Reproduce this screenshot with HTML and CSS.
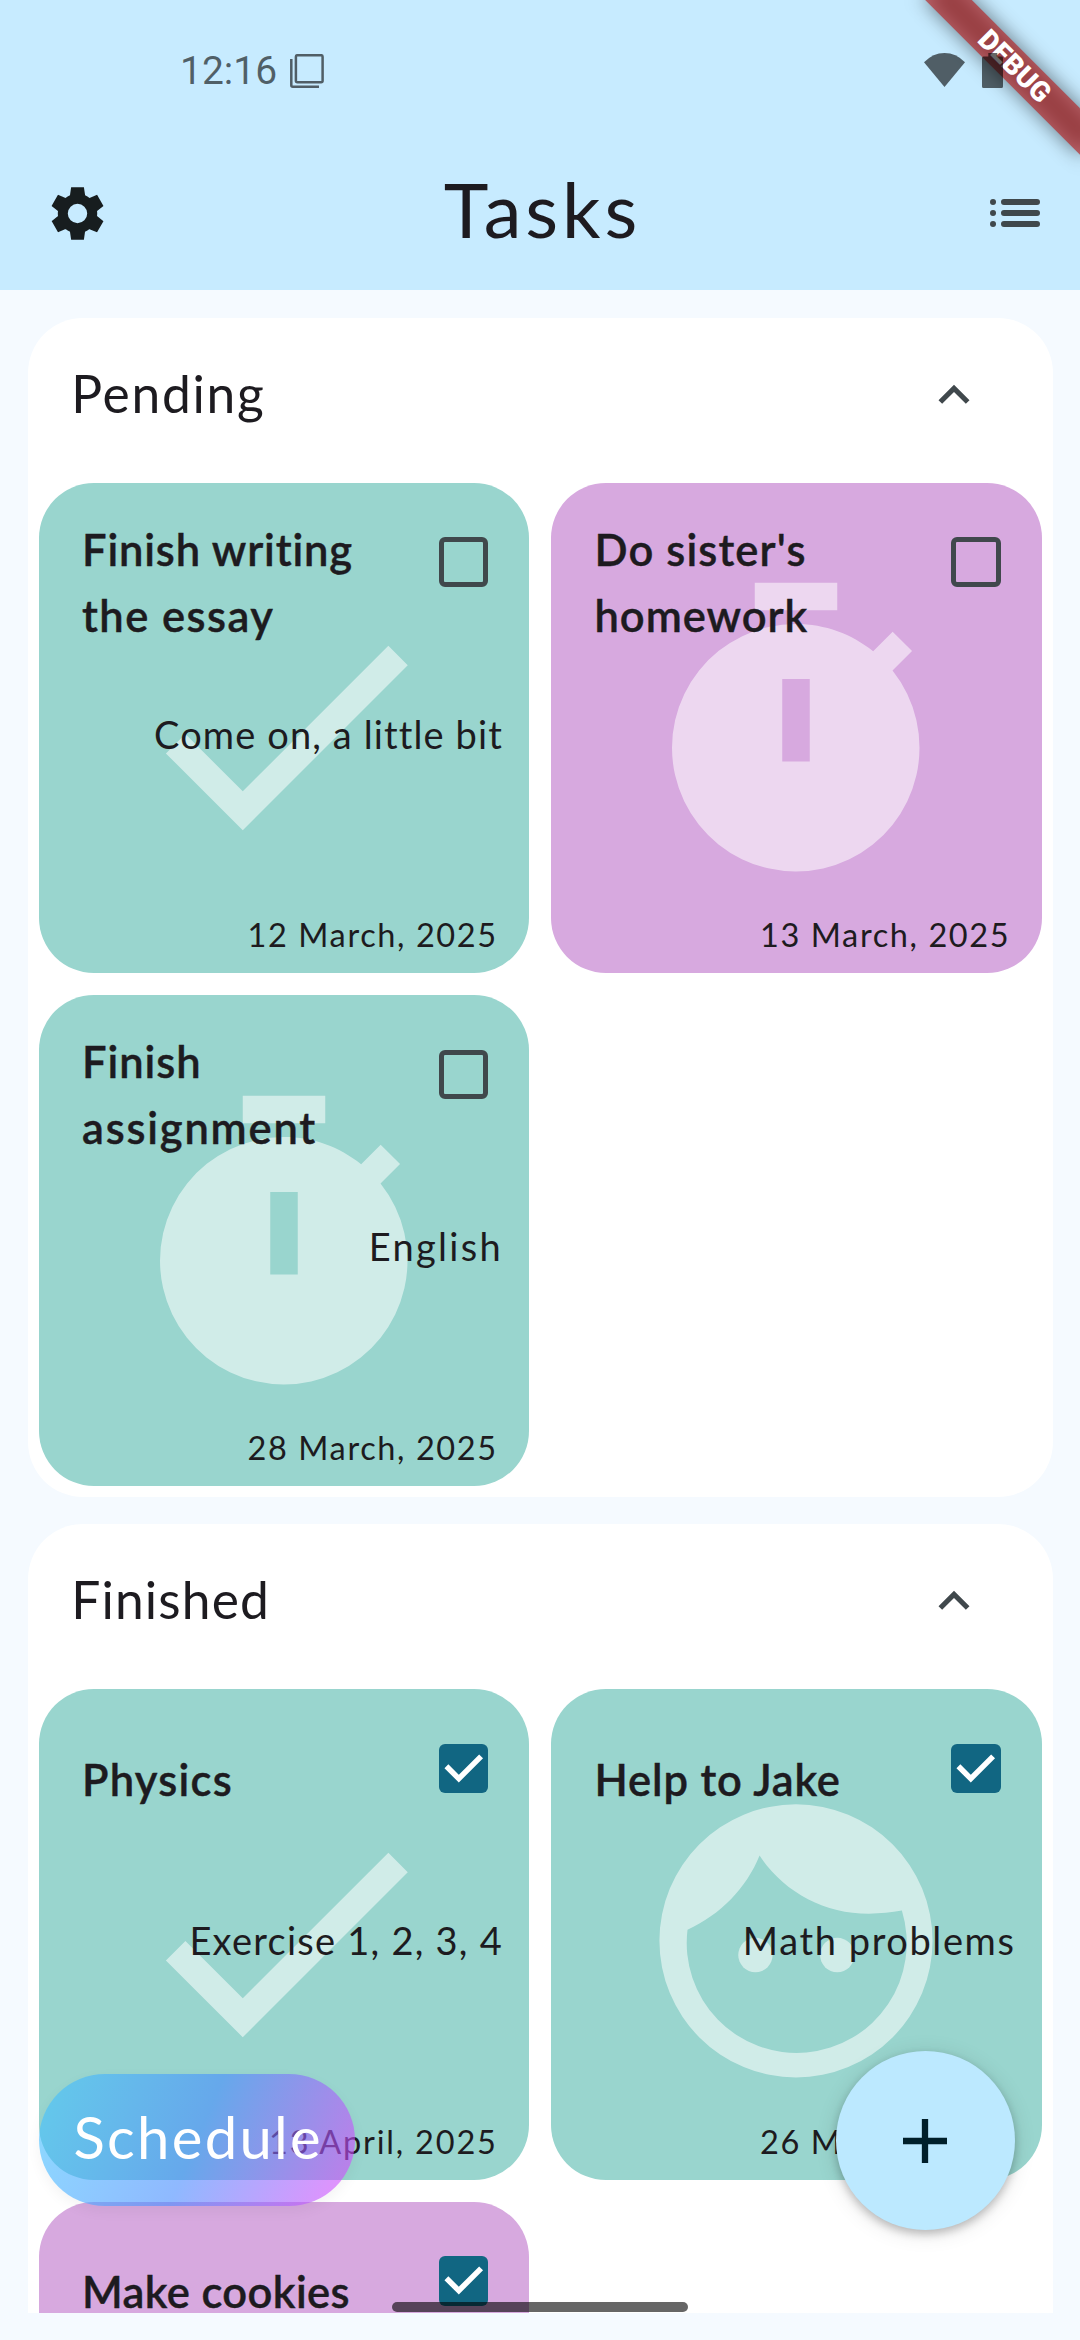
FILE: index.html
```html
<!DOCTYPE html>
<html lang="en">
<head>
<meta charset="utf-8">
<title>Tasks</title>
<link rel="stylesheet" href="styles.css">
</head>
<body>
<svg class="sprite" aria-hidden="true">
  <symbol id="check" viewBox="0 0 24 24"><path d="M9 16.17 4.83 12l-1.42 1.41L9 19 21 7l-1.41-1.41z"/></symbol>
  <symbol id="timer" viewBox="0 0 24 24"><path fill-rule="evenodd" d="M9 1h6v2H9zM12 4c2.12 0 4.07.74 5.61 1.98L19.03 4.56l1.41 1.41-1.42 1.42A9 9 0 1 1 12 4zM11 8v6h2V8z"/></symbol>
  <symbol id="face" viewBox="0 0 24 24"><path fill-rule="evenodd" d="M12 2.06a9.93 9.93 0 1 0 0 19.86 9.93 9.93 0 1 0 0-19.86zM9.35 5.79C11.1 8.4 14 10.01 17.3 10.01c.84 0 1.63-.08 2.4-.22A8 8 0 1 1 4.11 11.18C6.5 10.1 8.4 8.15 9.35 5.79z"/><circle cx="9.05" cy="13.02" r="1.25"/><circle cx="15" cy="13.02" r="1.25"/></symbol>
  <symbol id="chevron" viewBox="0 0 24 24"><path d="m12 8-6 6 1.41 1.41L12 10.83l4.59 4.58L18 14z"/></symbol>
  <symbol id="tick" viewBox="0 0 49.5 49.5"><path d="M7.4 22.3 19.8 34.6 42.1 12.4" fill="none" stroke="#fff" stroke-width="5.5"/></symbol>
</svg>

<div class="screen">
  <header class="top">
    <div class="status">
      <span class="clock">12:16</span>
      <svg class="status-tabs" viewBox="0 0 34 34"><path d="M5.9 2.7a1.5 1.5 0 0 1 1.5-1.5h23.700a1.500 1.500 0 0 1 1.500 1.500v24a1.500 1.500 0 0 1-1.500 1.500H7.400a1.500 1.500 0 0 1-1.500-1.500zM1.300 5v26.200a1.500 1.500 0 0 0 1.500 1.500H29" fill="none" stroke="currentColor" stroke-width="2.500"/></svg>
      <svg class="status-wifi" viewBox="0 0 41 34"><path d="M0 9.3Q9 0 20.5 0T41 9.3L20.5 34z"/></svg>
      <svg class="status-battery" viewBox="0 0 21 35"><path d="M6.300 0h9v3.500h4.200A1.500 1.500 0 0 1 21 5v28.500a1.500 1.500 0 0 1-1.500 1.500h-18A1.500 1.500 0 0 1 0 33.500V5a1.500 1.500 0 0 1 1.500-1.500h4.800z"/></svg>
    </div>
    <div class="appbar">
      <svg class="gear" viewBox="0 0 24 24"><path d="M19.44 12.99l-.01.02c.04-.33.08-.67.08-1.01 0-.34-.03-.66-.07-.99l.01.02 2.44-1.92-2.43-4.22-2.87 1.16.01.01c-.52-.4-1.09-.74-1.71-1h.01L14.44 2H9.57l-.44 3.07h.01c-.62.26-1.19.6-1.71 1l.01-.01-2.88-1.17-2.44 4.22 2.44 1.92.01-.02c-.04.33-.07.65-.07.99 0 .34.03.68.08 1.01l-.01-.02-2.1 1.65-.33.26 2.43 4.2 2.88-1.15-.02-.04c.53.41 1.1.75 1.73 1.01h-.03L9.58 22h4.85s.03-.18.06-.42l.38-2.65h-.01c.62-.26 1.2-.6 1.73-1.01l-.02.04 2.88 1.15 2.43-4.2s-.14-.12-.33-.26l-2.11-1.66zM12 15.700a3.700 3.700 0 1 1 0-7.400 3.700 3.700 0 0 1 0 7.400z"/></svg>
      <h1 class="title">Tasks</h1>
      <svg class="list" viewBox="0 0 50 28"><path d="M3 3h.01M3 14h.01M3 25h.01M14 3h33M14 14h33M14 25h33" stroke="currentColor" stroke-width="6" stroke-linecap="round"/></svg>
    </div>
  </header>

  <main class="content">
    <section class="panel">
      <div class="panel-head"><h2 class="panel-title pending">Pending</h2><svg class="chevron"><use href="#chevron"/></svg></div>
      <div class="grid">
        <article class="card teal">
          <svg class="mark"><use href="#check"/></svg>
          <div class="card-top"><h3 class="name"><span class="ls-8">Finish writing</span><br><span class="ls-14">the essay</span></h3><span class="box"></span></div>
          <p class="note ls-11">Come on, a little bit</p>
          <p class="date">12 March, 2025</p>
        </article>
        <article class="card purple">
          <svg class="mark"><use href="#timer"/></svg>
          <div class="card-top"><h3 class="name"><span class="ls-11">Do sister's</span><br><span class="ls-9">homework</span></h3><span class="box"></span></div>
          <p class="date">13 March, 2025</p>
        </article>
        <article class="card teal">
          <svg class="mark"><use href="#timer"/></svg>
          <div class="card-top"><h3 class="name"><span class="ls-9">Finish</span><br><span class="ls-18">assignment</span></h3><span class="box"></span></div>
          <p class="note ls-23">English</p>
          <p class="date">28 March, 2025</p>
        </article>
      </div>
    </section>

    <section class="panel">
      <div class="panel-head"><h2 class="panel-title finished">Finished</h2><svg class="chevron"><use href="#chevron"/></svg></div>
      <div class="grid">
        <article class="card teal">
          <svg class="mark"><use href="#check"/></svg>
          <div class="card-top"><h3 class="name ls-12">Physics</h3><span class="box done"><svg class="tick"><use href="#tick"/></svg></span></div>
          <p class="note ls-12">Exercise 1, 2, 3, 4</p>
          <p class="date ls-18">13 April, 2025</p>
        </article>
        <article class="card teal">
          <svg class="mark"><use href="#face"/></svg>
          <div class="card-top"><h3 class="name ls-8">Help to Jake</h3><span class="box done"><svg class="tick"><use href="#tick"/></svg></span></div>
          <p class="note ls-16">Math problems</p>
          <p class="date">26 March, 2025</p>
        </article>
        <article class="card purple">
          <div class="card-top"><h3 class="name ls-3">Make cookies</h3><span class="box done"><svg class="tick"><use href="#tick"/></svg></span></div>
        </article>
      </div>
    </section>
  </main>

  <a class="schedule">Schedule</a>
  <button class="fab" aria-label="Add task"><svg class="plus" viewBox="0 0 44 44"><path d="M22 0v44M0 22h44" stroke="currentColor" stroke-width="6.300"/></svg></button>
  <div class="debug"><span class="debug-text">DEBUG</span></div>
  <div class="home-bar"></div>
</div>
</body>
</html>
```
FILE: styles.css
```css
* { box-sizing: border-box; margin: 0; padding: 0; }

body {
  width: 1080px;
  height: 2340px;
  overflow: hidden;
  background: #f5faff;
  color: #1d1b20;
  font-family: Lato, "Open Sans", sans-serif;
}

.sprite { display: none; }

.screen {
  position: relative;
  width: 1080px;
  height: 2340px;
  overflow: hidden;
  display: flex;
  flex-direction: column;
}

/* Header */
.top { flex: none; height: 290px; background: #c7ebff; }

.status {
  position: relative;
  z-index: 5;
  height: 136px;
  padding: 4px 77px 0 180px;
  display: flex;
  align-items: center;
  color: rgba(0, 0, 0, .6);
  fill: currentColor;
}
.clock { font: 400 39px/46px Roboto, sans-serif; width: 110px; padding-top: 1px; }
.status-tabs { width: 34px; height: 34px; margin-top: 2px; }
.status-wifi { width: 41px; height: 34px; margin-left: auto; }
.status-battery { width: 21px; height: 35px; margin-left: 17px; }

.appbar {
  height: 154px;
  display: grid;
  grid-template-columns: 1fr auto 1fr;
  align-items: center;
  padding: 0 40.500px 0 45.500px;
}
.gear { width: 63px; height: 63px; fill: #171d1f; }
.title {
  font-size: 75.800px;
  font-weight: 400;
  line-height: 90px;
  letter-spacing: 3.900px;
  padding-bottom: 8.600px;
}
.list { width: 50px; height: 28px; justify-self: end; color: #40484c; }

/* Task panels */
.content {
  height: 2022.500px;
  flex: none;
  overflow: hidden;
  padding: 27.500px 27.500px 0;
  display: flex;
  flex-direction: column;
  gap: 27.500px;
}
.panel { flex: none; background: #fff; border-radius: 55px; padding-bottom: 11px; }
.panel-head {
  height: 154px;
  padding: 0 67.500px 0 43.800px;
  display: flex;
  align-items: center;
  justify-content: space-between;
}
.panel-title { font-size: 51.500px; line-height: 62px; font-weight: 400; padding-bottom: 4px; }
.pending { letter-spacing: 1.700px; }
.finished { letter-spacing: 1.150px; }
.chevron { width: 62px; height: 62px; fill: #40484c; }

.grid {
  display: grid;
  grid-template-columns: 490.500px 490.500px;
  gap: 22px;
  padding: 11px 11px 0;
}
.card {
  position: relative;
  height: 490.500px;
  border-radius: 55px;
  padding: 33.400px 0 12.600px 43.500px;
  display: flex;
  flex-direction: column;
}
.teal { background: #99d5ce; }
.purple { background: #d7a9df; }

.mark {
  position: absolute;
  left: 80.250px;
  top: 86.800px;
  width: 330px;
  height: 330px;
  fill: rgba(255, 255, 255, .54);
}
.card-top {
  position: relative;
  height: 132px;
  padding-right: 41px;
  display: flex;
  align-items: flex-start;
  justify-content: space-between;
}
.name {
  min-height: 113px;
  display: flex;
  flex-direction: column;
  justify-content: center;
  font-size: 43.500px;
  font-weight: 600;
  line-height: 66px;
  white-space: nowrap;
  -webkit-text-stroke: .4px currentColor;
}
.name br { display: none; }
.box {
  width: 49.500px;
  height: 49.500px;
  margin-top: 21.600px;
  border: 5.500px solid #40484c;
  border-radius: 6px;
}
.done { border: 0; background: #116682; }
.tick { display: block; width: 49.500px; height: 49.500px; }
.note {
  position: relative;
  margin-top: 56.800px;
  padding-right: 26px;
  font-size: 38px;
  line-height: 58px;
  text-align: right;
  white-space: nowrap;
}
.date {
  position: relative;
  margin-top: auto;
  padding-right: 31.300px;
  font-size: 32.500px;
  line-height: 50px;
  letter-spacing: 1.600px;
  text-align: right;
  white-space: nowrap;
}

/* Tracking steps */
.ls-3 { letter-spacing: .400px; }
.ls-8 { letter-spacing: .850px; }
.ls-9 { letter-spacing: .950px; }
.ls-11 { letter-spacing: 1.120px; }
.ls-12 { letter-spacing: 1.250px; }
.ls-14 { letter-spacing: 1.450px; }
.ls-16 { letter-spacing: 1.600px; }
.ls-18 { letter-spacing: 1.800px; }
.ls-23 { letter-spacing: 2.300px; }

/* Floating controls */
.schedule {
  position: absolute;
  left: 38.500px;
  top: 2074.300px;
  width: 316.500px;
  height: 132px;
  padding-left: 35px;
  border-radius: 66px;
  background: linear-gradient(112.700deg, rgba(64, 196, 255, .6), rgba(68, 138, 255, .6) 50%, rgba(224, 64, 251, .6));
  box-shadow: 0 5px 14px rgba(0, 0, 0, .05);
  color: #fff;
  font-size: 58px;
  line-height: 125px;
  letter-spacing: 2.300px;
}
.fab {
  position: absolute;
  left: 835.500px;
  top: 2051.300px;
  width: 179px;
  height: 179px;
  border: 0;
  border-radius: 50%;
  background: #bce9ff;
  color: #001f2a;
  display: flex;
  align-items: center;
  justify-content: center;
  box-shadow: 0 4px 8px rgba(0, 0, 0, .22), 0 3px 22px rgba(0, 0, 0, .12);
}
.plus { width: 44px; height: 44px; }

/* Corner ribbon */
.debug {
  position: absolute;
  left: 904.200px;
  top: 49.300px;
  width: 220px;
  height: 33px;
  transform: rotate(45deg);
  display: flex;
  align-items: center;
  justify-content: center;
}
.debug::before, .debug::after { content: ""; position: absolute; inset: 0; }
.debug::before { background: rgba(0, 0, 0, .5); filter: blur(10px); }
.debug::after { background: rgba(183, 28, 28, .627); }
.debug-text {
  position: relative;
  z-index: 1;
  padding-left: 2px;
  color: #fff;
  font: 900 28px/33px Roboto, sans-serif;
}

.home-bar {
  position: absolute;
  left: 392px;
  top: 2302px;
  width: 296px;
  height: 10px;
  border-radius: 5px;
  background: rgba(0, 0, 0, .6);
}
```
